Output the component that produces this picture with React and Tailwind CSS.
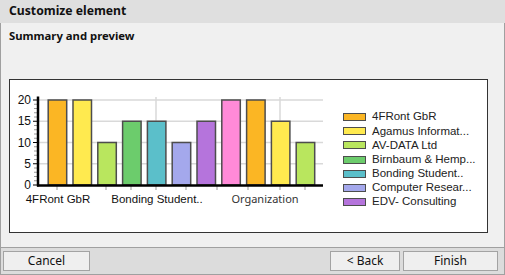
import React from 'react';

const series = [
  { name: '4FRont GbR', color: '#fbb624' },
  { name: 'Agamus Informat...', color: '#ffea4f' },
  { name: 'AV-DATA Ltd', color: '#b9e65e' },
  { name: 'Birnbaum & Hemp...', color: '#6ccc6c' },
  { name: 'Bonding Student..', color: '#5bbfca' },
  { name: 'Computer Resear...', color: '#a4a8ec' },
  { name: 'EDV- Consulting', color: '#b574dc' },
];

const bars = [
  { v: 20, c: '#fbb624' },
  { v: 20, c: '#ffea4f' },
  { v: 10, c: '#b9e65e' },
  { v: 15, c: '#6ccc6c' },
  { v: 15, c: '#5bbfca' },
  { v: 10, c: '#a4a8ec' },
  { v: 15, c: '#b574dc' },
  { v: 20, c: '#ff8ad8' },
  { v: 20, c: '#fbb624' },
  { v: 15, c: '#ffea4f' },
  { v: 10, c: '#b9e65e' },
];

const BASE = 105;
const UNIT = 4.25;

const Chart = () => (
  <svg width="333" height="152" className="shrink-0">
    {[5, 10, 15, 20].map(v => (
      <line key={v} x1="28" x2="313" y1={BASE - v * UNIT} y2={BASE - v * UNIT} stroke="#d9d9d9" strokeWidth="1.5" />
    ))}
    {[146, 270].map(x => (
      <line key={x} x1={x} x2={x} y1="17" y2={BASE} stroke="#d9d9d9" strokeWidth="1.5" />
    ))}
    {Array.from({ length: 21 }).map((_, i) => (
      <line key={i} x1={i % 5 === 0 ? 23 : 24} x2="27" y1={BASE - i * UNIT} y2={BASE - i * UNIT} stroke={i % 5 === 0 ? '#000' : '#999'} strokeWidth="1" />
    ))}
    {[0, 5, 10, 15, 20].map(v => (
      <text key={v} x="21" y={BASE - v * UNIT + 4} textAnchor="end" fontSize="12" fontFamily="Liberation Sans, Arial, sans-serif" fill="#111">{v}</text>
    ))}
    {bars.map((b, i) => (
      <rect key={i} x={38.2 + i * 24.8} y={BASE - b.v * UNIT} width="18.5" height={b.v * UNIT} fill={b.c} stroke="#4d4d4d" strokeWidth="1.5" />
    ))}
    {[47, 96, 121, 146, 176, 207, 238, 270, 295].map(x => (
      <line key={x} x1={x} x2={x} y1={BASE} y2={BASE + 5} stroke="#999" strokeWidth="1" />
    ))}
    <line x1="28" x2="28" y1="16.5" y2="106.5" stroke="#000" strokeWidth="2.5" />
    <line x1="27" x2="313" y1="105.5" y2="105.5" stroke="#000" strokeWidth="2.5" />
    <text x="48" y="123" textAnchor="middle" fontSize="11.5" fontFamily="Liberation Sans, Arial, sans-serif" fill="#111">4FRont GbR</text>
    <text x="147" y="123" textAnchor="middle" fontSize="11.5" fontFamily="Liberation Sans, Arial, sans-serif" fill="#111">Bonding Student..</text>
    <text x="255" y="123" textAnchor="middle" fontSize="11" fontFamily="Noto Sans, sans-serif" fill="#333">Organization</text>
  </svg>
);

const Legend = () => (
  <div className="flex flex-col pt-[30px]">
    {series.map(s => (
      <div key={s.name} className="h-[14.2px] flex items-center">
        <span className="w-[23px] h-[8px] border-[1.5px] border-[#4d4d4d] shrink-0" style={{ backgroundColor: s.color }}></span>
        <span className="ml-[6px] text-[11.5px] leading-none text-[#222] whitespace-nowrap font-['Liberation_Sans',Arial,sans-serif]">{s.name}</span>
      </div>
    ))}
  </div>
);

const Button = ({ label, width }) => (
  <button className={`${width} h-[20px] bg-[#efefef] border border-[#a3a3a3] text-[12px] text-[#111] leading-none flex items-center justify-center font-['Noto_Sans',sans-serif]`}>{label}</button>
);

export default function App() {
  return (
    <div className="w-[505px] h-[275px] flex flex-col bg-[#f0f0f0] font-['Noto_Sans',sans-serif] text-[#111]">
      <div className="h-[23px] shrink-0 bg-[#dfdfdf] pl-[9px] flex items-center text-[12.2px] font-bold">Customize element</div>
      <div className="flex-1 flex flex-col border-l border-r border-b border-[#a0a0a0]">
        <div className="flex-1 pl-[8px] pt-[4px]">
          <div className="text-[11.3px] font-bold h-[18px] flex items-center">Summary and preview</div>
          <div className="mt-[34px] w-[479px] h-[154px] border border-[#333] bg-white flex">
            <Chart />
            <Legend />
          </div>
        </div>
        <div className="h-[27px] shrink-0 border-t border-[#a0a0a0] bg-[#dcdcdc] flex items-start pt-[3px] pl-[2px] pr-[6px]">
          <Button label="Cancel" width="w-[87px]" />
          <div className="flex-1"></div>
          <Button label="< Back" width="w-[70px]" />
          <div className="w-[3px]"></div>
          <Button label="Finish" width="w-[95px]" />
        </div>
      </div>
    </div>
  );
}
